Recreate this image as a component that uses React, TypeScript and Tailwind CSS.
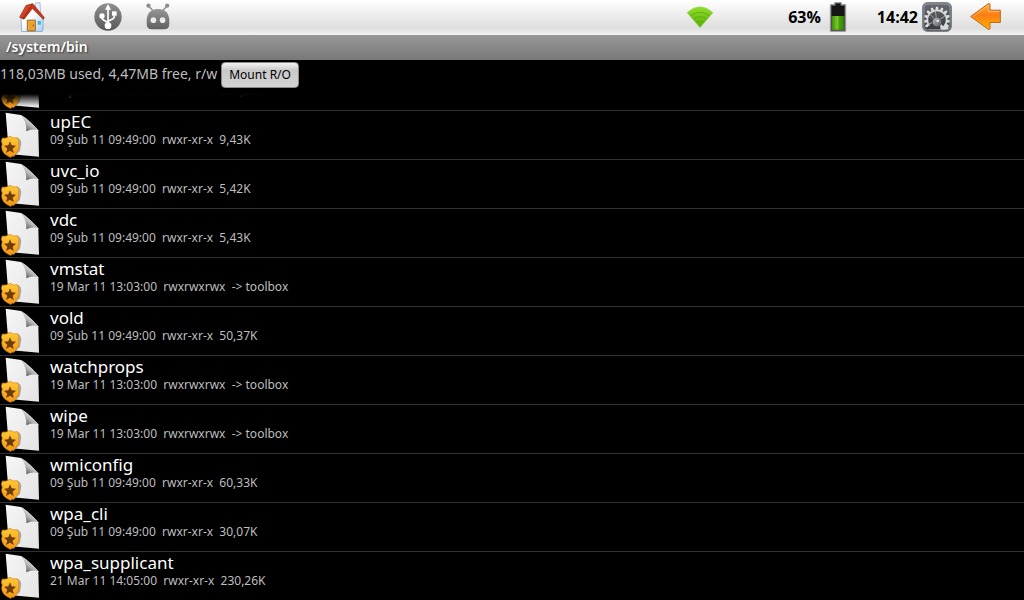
import React from "react";

type Entry = { name?: string; date: string; mode: string; info: string };

const FILES: Entry[] = [
  { date: "09 Şub 11 09:49:00", mode: "rwxr-xr-x", info: "236,25K" },
  { name: "upEC", date: "09 Şub 11 09:49:00", mode: "rwxr-xr-x", info: "9,43K" },
  { name: "uvc_io", date: "09 Şub 11 09:49:00", mode: "rwxr-xr-x", info: "5,42K" },
  { name: "vdc", date: "09 Şub 11 09:49:00", mode: "rwxr-xr-x", info: "5,43K" },
  { name: "vmstat", date: "19 Mar 11 13:03:00", mode: "rwxrwxrwx", info: "-> toolbox" },
  { name: "vold", date: "09 Şub 11 09:49:00", mode: "rwxr-xr-x", info: "50,37K" },
  { name: "watchprops", date: "19 Mar 11 13:03:00", mode: "rwxrwxrwx", info: "-> toolbox" },
  { name: "wipe", date: "19 Mar 11 13:03:00", mode: "rwxrwxrwx", info: "-> toolbox" },
  { name: "wmiconfig", date: "09 Şub 11 09:49:00", mode: "rwxr-xr-x", info: "60,33K" },
  { name: "wpa_cli", date: "09 Şub 11 09:49:00", mode: "rwxr-xr-x", info: "30,07K" },
  { name: "wpa_supplicant", date: "21 Mar 11 14:05:00", mode: "rwxr-xr-x", info: "230,26K" },
];

function HomeIcon() {
  return (
    <svg viewBox="55 3 84 92" className="h-[31px] w-7" aria-hidden="true">
      <defs>
        <linearGradient id="roof" x1="0" y1="0" x2="1" y2="1">
          <stop offset="0" stopColor="#f0643c" />
          <stop offset="1" stopColor="#a81f08" />
        </linearGradient>
        <linearGradient id="wall" x1="0" y1="0" x2="1" y2="1">
          <stop offset="0.4" stopColor="#ffffff" />
          <stop offset="1" stopColor="#a9cdf5" />
        </linearGradient>
      </defs>
      <path d="M107 9l14-2 2 34-16-16z" fill="#e6eefb" stroke="#8fa6cc" strokeWidth="2" />
      <path d="M64 54L98 20l32 34v36l-3 4H66z" fill="url(#wall)" stroke="#6f95cc" strokeWidth="2" />
      <path d="M79 16l19-5-2 14-24 32-12-6z" fill="url(#roof)" stroke="#8d1a06" strokeWidth="2" />
      <path d="M98 11l3 1 33 40-3 6-33-33-24 31-3-3z" fill="#c8361a" stroke="#85200c" strokeWidth="1.5" />
      <path d="M83 60h24v32H83z" fill="#f2a93b" stroke="#a5651a" strokeWidth="3" />
      <path d="M88 65h14v24H88z" fill="#e8a030" />
      <circle cx="101" cy="76" r="2" fill="#6b3d0b" />
      <path d="M113 61h12v14h-12z" fill="#42b4d4" stroke="#d9f2ff" strokeWidth="2" />
    </svg>
  );
}

function UsbIcon() {
  return (
    <svg viewBox="0 0 84 84" className="size-7" aria-hidden="true">
      <defs>
        <linearGradient id="usb" x1="0" y1="0" x2="0" y2="1">
          <stop offset="0" stopColor="#909090" />
          <stop offset="1" stopColor="#585858" />
        </linearGradient>
      </defs>
      <circle cx="42" cy="42" r="41" fill="url(#usb)" />
      <g fill="none" stroke="#fff" strokeWidth="5">
        <path d="M42 68V14" />
        <path d="M24 40v4q0 4 5 7l13 8" />
        <path d="M61 32v8q0 5-5 8l-14 7" />
      </g>
      <path d="M42 3l9 17H33z" fill="#fff" />
      <circle cx="42" cy="68" r="10" fill="#fff" />
      <circle cx="24" cy="39" r="8" fill="#fff" />
      <path d="M54 25h14v13H54z" fill="#fff" />
    </svg>
  );
}

function RobotIcon() {
  return (
    <svg viewBox="442 10 68 78" className="h-7 w-6" aria-hidden="true">
      <defs>
        <linearGradient id="bot" x1="0" y1="0" x2="0" y2="1">
          <stop offset="0" stopColor="#969696" />
          <stop offset="1" stopColor="#606060" />
        </linearGradient>
      </defs>
      <path d="M449 18l14 14M502 18l-14 14" stroke="#8c8c8c" strokeWidth="4" />
      <circle cx="449" cy="17" r="6" fill="#8c8c8c" />
      <circle cx="502" cy="17" r="6" fill="#8c8c8c" />
      <path d="M444 60c0-20 10-34 32-34s32 14 32 34v9c0 10-5 15-15 15h-34c-10 0-15-5-15-15z" fill="url(#bot)" />
      <circle cx="463" cy="58" r="8" fill="#ececec" />
      <circle cx="489" cy="58" r="8" fill="#ececec" />
    </svg>
  );
}

function WifiIcon() {
  return (
    <svg viewBox="0 0 84 66" className="h-[22px] w-7" aria-label="Wi-Fi">
      <defs>
        <linearGradient id="wifi" x1="0" y1="0" x2="0" y2="1">
          <stop offset="0" stopColor="#92dc2c" />
          <stop offset="1" stopColor="#58b004" />
        </linearGradient>
      </defs>
      <path d="M3 20Q42-15 81 20L42 65z" fill="url(#wifi)" stroke="#a9dc66" strokeWidth="2" />
      <path d="M13 30Q42 7 71 30M21 40Q42 24 63 40M30 49Q42 40 54 49" fill="none" stroke="#559f10" strokeWidth="2" />
    </svg>
  );
}

function BatteryIcon() {
  return (
    <svg viewBox="481 5 52 90" className="h-[30px] w-[18px]" aria-hidden="true">
      <defs>
        <linearGradient id="charge" x1="0" y1="0" x2="1" y2="0">
          <stop offset="0" stopColor="#3c9404" />
          <stop offset="0.5" stopColor="#83cb35" />
          <stop offset="0.55" stopColor="#4da80d" />
          <stop offset="1" stopColor="#327d05" />
        </linearGradient>
      </defs>
      <path d="M497 7h20v6h13v80h-46V13h13z" fill="#505050" stroke="#999" strokeWidth="3" />
      <path d="M500 10h14v7h12v30h-38V17h12z" fill="#151515" />
      <path d="M489 47h36v41h-36z" fill="url(#charge)" />
    </svg>
  );
}

const TEETH = [0, 24, 48, 72, 96, 120, 144, 168, 192, 216, 240, 264, 288, 312, 336];

function SettingsIcon() {
  return (
    <svg viewBox="0 0 90 90" className="size-[30px]" aria-hidden="true">
      <defs>
        <linearGradient id="plate" x1="0" y1="0" x2="0" y2="1">
          <stop offset="0" stopColor="#6a6e74" />
          <stop offset="1" stopColor="#303337" />
        </linearGradient>
        <linearGradient id="hub" x1="0" y1="0" x2="1" y2="1">
          <stop offset="0" stopColor="#c4c6c9" />
          <stop offset="1" stopColor="#54575b" />
        </linearGradient>
        <clipPath id="plateClip">
          <rect x="7" y="7" width="76" height="76" rx="10" />
        </clipPath>
      </defs>
      <rect x="2" y="2" width="86" height="86" rx="15" fill="url(#plate)" stroke="#7e848c" strokeWidth="4" />
      <g clipPath="url(#plateClip)">
        <g fill="#dedede">
          {TEETH.map((a) => (
            <path key={a} d="M40 24l2-10h6l2 10z" transform={`rotate(${a} 45 54)`} />
          ))}
        </g>
        <circle cx="45" cy="54" r="29" fill="none" stroke="#d8d8d8" strokeWidth="5" />
        <path d="M45 58L25 38M45 58L40 28M45 58l23-15M45 58L18 66" stroke="#a4a6a9" strokeWidth="3" />
        <path d="M12 83l8-12 14-4 18 2 12 14z" fill="#3a3d41" />
        <circle cx="45" cy="60" r="14" fill="url(#hub)" stroke="#44474b" strokeWidth="2" />
        <circle cx="47" cy="57" r="4" fill="#e2e3e5" />
        <path d="M54 71l5-4 4 6 5-1 1-8 6 1-1 9 6 2-3 9H57z" fill="#d8d8d8" />
      </g>
      <rect x="6" y="6" width="78" height="78" rx="11" fill="none" stroke="#a6abb2" strokeWidth="2" />
    </svg>
  );
}

function BackIcon() {
  return (
    <svg viewBox="332 7 96 86" className="h-[29px] w-8" aria-hidden="true">
      <defs>
        <linearGradient id="back" x1="0" y1="0" x2="0" y2="1">
          <stop offset="0" stopColor="#ffae42" />
          <stop offset="0.45" stopColor="#fb7e14" />
          <stop offset="1" stopColor="#ffb400" />
        </linearGradient>
      </defs>
      <path d="M334 50L389 10l3 3v18h31v37h-31v18l-3 4z" fill="url(#back)" stroke="#bd6a1b" strokeWidth="3" strokeLinejoin="round" />
      <path d="M341 50l46-34v19h32" fill="none" stroke="#ffc878" strokeWidth="2" />
    </svg>
  );
}

function FileIcon() {
  return (
    <svg viewBox="0 3 132 147" className="h-[49px] w-11 shrink-0" aria-hidden="true">
      <defs>
        <linearGradient id="page" x1="0" y1="0" x2="1" y2="1">
          <stop offset="0" stopColor="#f6f6f6" />
          <stop offset="1" stopColor="#e4e4e4" />
        </linearGradient>
        <linearGradient id="fold" x1="0.75" y1="0.35" x2="0.3" y2="0.95">
          <stop offset="0" stopColor="#e8e8e8" />
          <stop offset="0.5" stopColor="#b4b4b4" />
          <stop offset="1" stopColor="#606060" />
        </linearGradient>
        <linearGradient id="badge" x1="0" y1="0" x2="0" y2="1">
          <stop offset="0" stopColor="#ffca38" />
          <stop offset="1" stopColor="#f49512" />
        </linearGradient>
      </defs>
      <path d="M17 8l46 7c18 10 38 30 52 46l2 79-90-8z" fill="url(#page)" />
      <path d="M63 15c18 10 38 30 52 46-12-5-26-3-36 3 1-18-4-35-16-49z" fill="url(#fold)" />
      <path d="M54 83q8 4 10 16l-4 24-21 18 1-50z" fill="#aaa" />
      <path d="M7 84q12 3 23-5 11 8 22 4l5 10q-3 6 0 16 1 22-26 33Q5 131 5 111q4-10-1-17z" fill="url(#badge)" stroke="#d68109" strokeWidth="2" />
      <path d="M30 94l5 12 13 1-10 9 3 13-11-7-12 7 4-13-10-9 13-1z" fill="#6d3c08" />
    </svg>
  );
}

export default function App() {
  return (
    <div className="flex h-screen flex-col overflow-hidden bg-black font-['Noto_Sans','Open_Sans',sans-serif] text-white">
      <header className="flex h-[35px] shrink-0 items-center justify-between bg-linear-to-b from-white via-[#dedede] via-80% to-[#f4f4f4] pr-[22px] pb-0.5 pl-[18px] text-black">
        <div className="flex h-full items-center">
          <button type="button" aria-label="Home">
            <HomeIcon />
          </button>
          <span className="ml-12">
            <UsbIcon />
          </span>
          <span className="ml-6">
            <RobotIcon />
          </span>
        </div>
        <div className="flex h-full items-center font-['Open_Sans','Noto_Sans',sans-serif] text-base font-bold">
          <span className="mr-[74px]">
            <WifiIcon />
          </span>
          <span>63%</span>
          <span className="ml-2">
            <BatteryIcon />
          </span>
          <time className="ml-[30px]">14:42</time>
          <button type="button" aria-label="Settings" className="ml-1">
            <SettingsIcon />
          </button>
          <button type="button" aria-label="Back" className="ml-[18px]">
            <BackIcon />
          </button>
        </div>
      </header>

      <h1 className="h-[25px] shrink-0 bg-linear-to-b from-[#989898] to-[#787878] px-1.5 text-sm leading-6 font-semibold text-shadow-[1px_1px_2px_#333]">
        /system/bin
      </h1>

      <div className="flex h-[34px] shrink-0 items-start gap-1 text-sm text-[#bebebe]">
        <p className="leading-7">118,03MB used, 4,47MB free, r/w</p>
        <button
          type="button"
          className="mt-0.5 h-[26px] rounded border border-[#8a8a8a] bg-linear-to-b from-[#f4f4f4] via-[#c9c9c9] via-30% to-[#d4d4d4] px-[7px] text-xs text-black"
        >
          Mount R/O
        </button>
      </div>

      <main className="relative min-h-0 flex-1 overflow-hidden">
        <ul className="-mt-8">
          {FILES.map((f, i) => (
            <li key={i} className="flex h-[49px] gap-1.5 border-b border-[#323232]">
              <FileIcon />
              <div>
                <h2 className="h-[23px] text-[17px] leading-[22px]">{f.name}</h2>
                <p className="text-xs leading-3 whitespace-pre text-[#bebebe]">
                  {`${f.date}  ${f.mode}  ${f.info}`}
                </p>
              </div>
            </li>
          ))}
        </ul>
        <div className="pointer-events-none absolute inset-x-0 top-0 h-3 bg-linear-to-b from-black to-transparent" />
      </main>
    </div>
  );
}
